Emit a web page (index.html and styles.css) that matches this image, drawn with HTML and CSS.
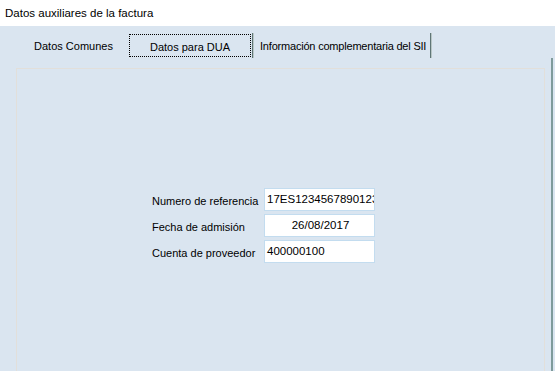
FILE: index.html
```html
<!DOCTYPE html>
<html lang="es">
<head>
  <meta charset="UTF-8">
  <title>Datos auxiliares de la factura</title>
  <link rel="stylesheet" href="styles.css">
</head>
<body>
  <!-- Title -->
  <div class="titlebar">Datos auxiliares de la factura</div>

  <div class="window">
    <!-- Tabs -->
    <div class="tabs">
      <div class="tab tab-common">Datos Comunes</div>
      <div class="tab tab-dua active">Datos para DUA</div>
      <div class="sep"></div>
      <div class="tab tab-sii">Información complementaria del SII</div>
      <div class="sep"></div>
    </div>

    <!-- Tab body -->
    <div class="frame">
      <div class="panel">
        <div class="form">
          <label class="label">Numero de referencia</label>
          <div class="field">17ES1234567890123456</div>
          <label class="label">Fecha de admisión</label>
          <div class="field center">26/08/2017</div>
          <label class="label">Cuenta de proveedor</label>
          <div class="field">400000100</div>
        </div>
      </div>
    </div>
  </div>
</body>
</html>
```

FILE: styles.css
```css
/* General */
body {
  margin: 0;
  font-family: 'Liberation Sans', Arial, sans-serif;
  font-size: 11px;
  color: #000;
  background: #dae5f0;
  height: 371px;
  overflow: hidden;
}

.titlebar {
  background: #fff;
  height: 26px;
  line-height: 26px;
  padding-left: 5px;
  font-size: 11.5px;
}

.window {
  display: flex;
  flex-direction: column;
  height: 345px;
}

/* Tabs */
.tabs {
  display: flex;
  align-items: center;
  height: 32px;
  padding-left: 18px;
  box-sizing: border-box;
  padding-top: 7px;
}

.tab {
  height: 23px;
  line-height: 24px;
  box-sizing: border-box;
  white-space: nowrap;
}

.tab-common {
  width: 111px;
  text-align: center;
}

.tab-dua {
  width: 122px;
  text-align: center;
  border: 1px dotted #000;
  line-height: 22px;
  padding-top: 1px;
}

.tab-sii {
  padding: 0 3px 0 6px;
  letter-spacing: -0.2px;
}

.sep {
  width: 1px;
  height: 25px;
  margin-left: 1px;
  background: #5f7676;
  border-right: 1px solid #b8c6c6;
}

/* Body */
.frame {
  flex: 1;
  padding: 10px 8px 0 16px;
  border-right: 2px solid #7e9a9a;
  width: 553px;
  box-sizing: border-box;
}

.panel {
  height: 100%;
  width: 529px;
  box-sizing: border-box;
  border: 1px solid #e2dfda;
  border-bottom: none;
  padding: 119px 0 0 135px;
}

.form {
  display: grid;
  grid-template-columns: 112px 111px;
  grid-auto-rows: 23px;
  row-gap: 3px;
  align-items: center;
}

.label {
  white-space: nowrap;
  padding-top: 3px;
}

.field {
  height: 23px;
  line-height: 21px;
  box-sizing: border-box;
  background: #fff;
  border: 1px solid #c3dcef;
  padding-left: 2px;
  white-space: nowrap;
  overflow: hidden;
  font-size: 11.5px;
}

.field.center {
  text-align: center;
}
```
